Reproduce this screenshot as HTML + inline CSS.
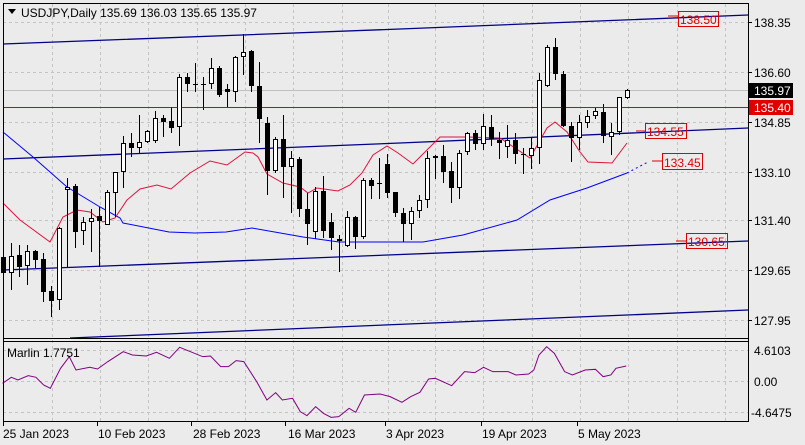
<!DOCTYPE html><html><head><style>
body{margin:0;background:#ebebeb;width:805px;height:445px;overflow:hidden;font-family:"Liberation Sans",sans-serif}
svg{position:absolute;left:0;top:0}
text{font-family:"Liberation Sans",sans-serif;font-size:12px}
</style></head><body>
<svg id="s" width="805" height="445" xmlns="http://www.w3.org/2000/svg">
<rect width="805" height="445" fill="#ebebeb"/>
<g stroke="#c4c4c4" stroke-dasharray="3,3" stroke-width="1">
<line x1="3" x2="748" y1="22.5" y2="22.5"/><line x1="3" x2="748" y1="72.5" y2="72.5"/><line x1="3" x2="748" y1="122.5" y2="122.5"/><line x1="3" x2="748" y1="172.5" y2="172.5"/><line x1="3" x2="748" y1="220.5" y2="220.5"/><line x1="3" x2="748" y1="270.5" y2="270.5"/><line x1="3" x2="748" y1="320.5" y2="320.5"/>
<line x1="3" x2="748" y1="350.5" y2="350.5"/><line x1="3" x2="748" y1="381.5" y2="381.5"/><line x1="3" x2="748" y1="412.5" y2="412.5"/>
<line x1="52.5" x2="52.5" y1="4" y2="421"/><line x1="100.5" x2="100.5" y1="4" y2="421"/><line x1="148.5" x2="148.5" y1="4" y2="421"/><line x1="197.5" x2="197.5" y1="4" y2="421"/><line x1="245.5" x2="245.5" y1="4" y2="421"/><line x1="293.5" x2="293.5" y1="4" y2="421"/><line x1="342.5" x2="342.5" y1="4" y2="421"/><line x1="388.5" x2="388.5" y1="4" y2="421"/><line x1="435.5" x2="435.5" y1="4" y2="421"/><line x1="483.5" x2="483.5" y1="4" y2="421"/><line x1="532.5" x2="532.5" y1="4" y2="421"/><line x1="580.5" x2="580.5" y1="4" y2="421"/><line x1="628.5" x2="628.5" y1="4" y2="421"/><line x1="677.5" x2="677.5" y1="4" y2="421"/><line x1="725.5" x2="725.5" y1="4" y2="421"/>
</g>
<line x1="3" x2="748" y1="90.5" y2="90.5" stroke="#c0c0c0"/>
<line x1="3" x2="748" y1="107.5" y2="107.5" stroke="#e00000"/>
<g fill="none" stroke="#00008b" stroke-width="1.3">
<polyline points="3,44 400,29 748,15"/>
<polyline points="3,159 400,143 748,128"/>
<polyline points="3,270 748,241"/>
<polyline points="70,338 748,310"/>
</g>
<polyline fill="none" stroke="#0000ff" stroke-width="1" points="3,132 33,157 67,187 100,207 120,218 123,223 169,232 195,233 226,232 252,228 303,237 339,242 357,242 393,242 423,242 463,235 510,222 517,220 550,200 587,188 627,173"/>
<polyline fill="none" stroke="#0000ff" stroke-dasharray="2,3" points="627,173 648,162"/>
<polyline fill="none" stroke="#dc143c" stroke-width="1" points="3,203 20,220 50,242 63,217 77,210 90,212 103,222 115,218 127,200 140,189 157,185 171,189 190,173 210,161 227,165 245,152 253,153 258,157 267,174 283,183 300,187 308,193 317,188 338,191 350,185 362,173 373,155 387,146 398,153 413,164 425,152 440,137 467,137 500,138 530,158 547,128 555,122 567,132 580,152 588,162 612,163 627,143"/>
<g id="c"></g>
<g transform="translate(0,220) scale(0.5133,0.3333)"><polyline fill="none" stroke="#800080" stroke-width="1" vector-effect="non-scaling-stroke" points="5,490 22,472 35,480 55,467 70,472 85,495 98,505 118,445 135,410 148,450 175,442 190,447 210,425 240,395 258,405 285,408 305,397 330,415 350,382 395,410 410,408 430,440 445,440 460,422 475,425 500,485 520,540 537,518 550,540 570,535 585,575 598,587 615,560 630,580 645,592 660,590 680,565 693,577 710,525 740,522 760,530 783,547 800,530 818,517 835,477 848,475 880,497 905,455 925,458 942,442 960,455 990,455 1005,465 1030,462 1040,450 1050,405 1065,380 1080,400 1100,455 1115,465 1140,450 1160,448 1175,470 1190,465 1200,445 1220,438"/></g>
<g stroke="#000" fill="none">
<line x1="3.5" y1="3" x2="3.5" y2="422"/><line x1="748.5" y1="3" x2="748.5" y2="422"/>
<line x1="3" y1="3.5" x2="749" y2="3.5"/><line x1="3" y1="338.5" x2="749" y2="338.5"/><line x1="3" y1="341.5" x2="749" y2="341.5"/><line x1="3" y1="421.5" x2="749" y2="421.5"/>
</g>
<g stroke="#000"><line x1="748" x2="752" y1="22.5" y2="22.5"/><line x1="748" x2="752" y1="72.5" y2="72.5"/><line x1="748" x2="752" y1="122.5" y2="122.5"/><line x1="748" x2="752" y1="172.5" y2="172.5"/><line x1="748" x2="752" y1="220.5" y2="220.5"/><line x1="748" x2="752" y1="270.5" y2="270.5"/><line x1="748" x2="752" y1="320.5" y2="320.5"/></g>
<g fill="#000">
<text x="754" y="27">138.35</text><text x="754" y="77">136.60</text><text x="754" y="127">134.85</text><text x="754" y="177">133.10</text><text x="754" y="225">131.40</text><text x="754" y="275">129.65</text><text x="754" y="325">127.95</text>
<text x="754" y="355">4.6103</text><text x="754" y="386">0.00</text><text x="751" y="417">-4.6475</text>
</g>
<rect x="749" y="83" width="44" height="15" fill="#000"/><text x="754" y="95" fill="#fff">135.97</text>
<rect x="749" y="100" width="44" height="15" fill="#e00000"/><text x="754" y="112" fill="#fff">135.40</text>
<g fill="none" stroke="#e00000"><rect x="678.5" y="11.5" width="40" height="15"/><rect x="645.5" y="123.5" width="41" height="15"/><rect x="662.5" y="153.5" width="40" height="16"/><rect x="686.5" y="233.5" width="41" height="15"/>
<line x1="636" x2="645" y1="131" y2="131"/><line x1="652" x2="662" y1="161" y2="161"/><line x1="676" x2="686" y1="241" y2="241"/><line x1="668" x2="678" y1="16" y2="16"/></g>
<g fill="#e00000"><text x="680" y="24">138.50</text><text x="647" y="136">134.55</text><text x="664" y="167">133.45</text><text x="688" y="246">130.65</text></g>
<path d="M8,9 L16,9 L12,14Z" fill="#000"/>
<text x="21" y="17">USDJPY,Daily  135.69 136.03 135.65 135.97</text>
<text x="7" y="357">Marlin 1.7751</text>
<g fill="#000"><text x="3" y="438">25 Jan 2023</text><text x="98" y="438">10 Feb 2023</text><text x="193" y="438">28 Feb 2023</text><text x="288" y="438">16 Mar 2023</text><text x="386" y="438">3 Apr 2023</text><text x="482" y="438">19 Apr 2023</text><text x="578" y="438">5 May 2023</text></g>
<g stroke="#000"><line x1="3.5" x2="3.5" y1="422" y2="426"/><line x1="97.5" x2="97.5" y1="422" y2="426"/><line x1="191.5" x2="191.5" y1="422" y2="426"/><line x1="285.5" x2="285.5" y1="422" y2="426"/><line x1="385.5" x2="385.5" y1="422" y2="426"/><line x1="481.5" x2="481.5" y1="422" y2="426"/><line x1="577.5" x2="577.5" y1="422" y2="426"/></g>
</svg>
<script>
var d=[[3,245,257,273,283,0],[11,243,256,273,290,1],[19,245,255,267,277,0],[27,245,251,266,285,1],[35,250,251,260,268,0],[43,253,259,292,302,0],[51,286,291,301,317,0],[59,227,228,300,310,1],[67,178,187,190,268,1],[75,184,186,232,248,0],[83,217,222,231,245,1],[91,209,218,222,252,1],[99,207,216,221,267,0],[107,190,192,225,225,1],[115,178,172,193,217,1],[123,136,143,172,188,1],[131,133,143,148,157,0],[139,115,142,148,153,1],[147,130,131,142,143,1],[155,111,118,141,143,1],[163,115,118,122,137,0],[171,107,121,128,133,0],[179,74,77,127,146,1],[187,73,77,84,92,0],[195,63,84,85,92,0],[203,77,84,85,110,0],[211,58,68,84,89,1],[219,66,68,95,97,0],[227,84,89,92,107,0],[235,56,57,92,102,1],[243,34,52,57,75,1],[251,50,51,86,92,0],[259,62,86,119,143,0],[267,117,123,171,195,0],[275,137,139,171,173,1],[283,115,139,167,198,0],[291,151,158,167,213,1],[299,157,159,209,217,0],[307,193,209,224,245,0],[315,187,191,232,239,1],[323,176,191,231,238,0],[331,213,222,238,250,0],[339,235,239,241,272,0],[347,211,217,246,247,1],[355,216,217,237,249,0],[363,178,180,237,239,1],[371,178,180,186,199,0],[379,158,183,184,199,0],[387,154,164,193,198,0],[395,192,192,213,217,0],[403,208,213,224,242,0],[411,207,211,224,240,1],[419,195,200,211,218,1],[427,151,158,200,208,1],[435,155,156,158,179,1],[443,145,156,172,183,0],[451,162,171,188,203,0],[459,150,153,188,199,1],[467,132,133,152,155,1],[475,130,133,144,150,0],[483,114,126,144,150,1],[491,115,127,139,146,0],[499,132,140,143,159,0],[507,125,140,147,158,1],[515,133,140,154,164,0],[523,148,154,155,174,0],[531,137,148,156,169,1],[539,73,80,148,164,1],[547,45,47,86,87,1],[555,38,47,74,80,0],[563,71,74,126,127,0],[571,122,126,138,162,0],[579,115,122,138,150,1],[587,110,116,123,128,1],[595,108,111,116,119,1],[603,104,112,136,143,0],[611,123,132,137,155,1],[619,97,97,132,135,1],[627,89,90,98,99,1]];
var g=document.getElementById("c"),s="";
d.forEach(function(c){var x=c[0],t=Math.min(c[2],c[3]),b=Math.max(c[2],c[3]);if(b-t<1)b=t+1;
s+='<line x1="'+(x+.5)+'" x2="'+(x+.5)+'" y1="'+c[1]+'" y2="'+c[4]+'" stroke="#000"/>';
if(c[5])s+='<rect x="'+(x-1.5)+'" y="'+(t+.5)+'" width="4" height="'+(b-t-1<0?0:b-t-1)+'" fill="#fff" stroke="#000"/>';
else s+='<rect x="'+(x-2)+'" y="'+t+'" width="5" height="'+(b-t)+'" fill="#000"/>';});
g.innerHTML=s;
</script>
</body></html>
